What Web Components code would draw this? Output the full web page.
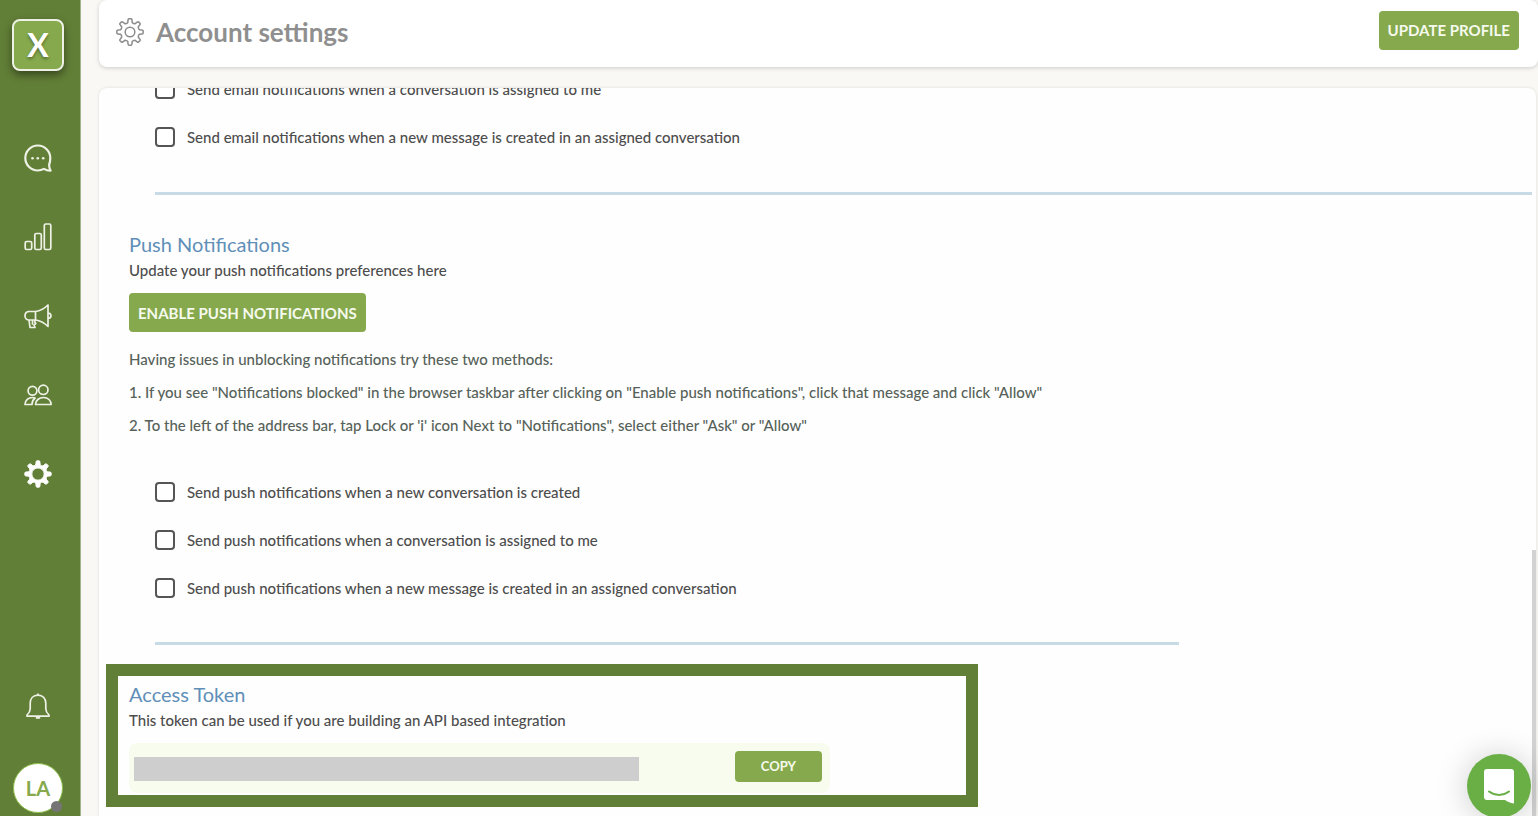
<!DOCTYPE html>
<html lang="en">
<head>
<meta charset="utf-8">
<meta name="viewport" content="width=device-width, initial-scale=1">
<title>Account settings</title>
<style>
    body {
        margin: 0;
        font-family: Lato, "Liberation Sans", sans-serif;
        font-size: 15px;
        font-weight: 500;
        line-height: 24px;
        color: #4d4d4d;
        --green-dark: #627f37;
        --green: #85a94c;
        --blue: #5f8fb8;
    }
</style>
</head>
<body>
<account-app></account-app>

<script>
// outline of an eight-toothed gear centred on 14,14
function gearPath(outer, inner) {
    const point = (radius, deg) => {
        const a = deg * Math.PI / 180;
        return `${(14 + radius * Math.sin(a)).toFixed(2)} ${(14 - radius * Math.cos(a)).toFixed(2)}`;
    };
    let d = '';
    for (let i = 0; i < 8; i++) {
        const a = i * 45;
        d += `${i ? 'L' : 'M'}${point(inner, a - 13)}`;
        d += `L${point(outer - 1, a - 9)}Q${point(outer, a - 8)} ${point(outer, a - 5)}`;
        d += `L${point(outer, a + 5)}Q${point(outer, a + 8)} ${point(outer - 1, a + 9)}`;
        d += `L${point(inner, a + 13)}Q${point(inner - 1, a + 22.5)} ${point(inner, a + 32)}`;
    }
    return d + 'z';
}

class AppButton extends HTMLElement {

    constructor() {
        super();
        this.attachShadow({ mode: 'open' });
    }

    connectedCallback() {
        this.shadowRoot.innerHTML = `
            <style>
                :host {
                    display: inline-block;
                }
                button {
                    display: block;
                    height: 39px;
                    padding: 0 9px;
                    border: 0;
                    border-radius: 4px;
                    background: var(--green);
                    color: #f6faee;
                    font: bold 15px/24px Lato, "Liberation Sans", sans-serif;
                    text-transform: uppercase;
                    white-space: nowrap;
                    cursor: pointer;
                }
                :host([small]) button {
                    height: 31px;
                    padding: 0 26px;
                    font-size: 13px;
                }
            </style>
            <button type="button"><slot></slot></button>
        `;
    }
}

class CheckRow extends HTMLElement {

    constructor() {
        super();
        this.attachShadow({ mode: 'open' });
    }

    connectedCallback() {
        this.shadowRoot.innerHTML = `
            <style>
                :host {
                    display: flex;
                    align-items: center;
                    height: 48px;
                    flex: none;
                }
                label {
                    display: flex;
                    align-items: center;
                    gap: 12px;
                }
                input {
                    appearance: none;
                    width: 20px;
                    height: 20px;
                    margin: 0;
                    border: 2px solid #555;
                    border-radius: 4px;
                    background: #fff;
                }
                input:checked {
                    background: var(--green);
                }
            </style>
            <label><input type="checkbox"><span><slot></slot></span></label>
        `;
    }
}

class SideBar extends HTMLElement {

    constructor() {
        super();
        this.attachShadow({ mode: 'open' });
    }

    connectedCallback() {
        this.shadowRoot.innerHTML = `
            <style>
                :host {
                    display: flex;
                    flex-direction: column;
                    align-items: center;
                    flex: none;
                    box-sizing: border-box;
                    width: 81px;
                    padding: 19px 4px 3px 0;
                    background: var(--green-dark);
                    border-right: 1px solid #a3b38a;
                }
                .logo {
                    box-sizing: border-box;
                    width: 52px;
                    height: 52px;
                    border: 2px solid #eef2e6;
                    border-radius: 8px;
                    background: var(--green);
                    box-shadow: 0 4px 8px rgba(0, 0, 0, .45);
                    color: #fff;
                    font-size: 32px;
                    font-weight: bold;
                    line-height: 48px;
                    text-align: center;
                    text-decoration: none;
                    text-shadow: 0 2px 3px rgba(0, 0, 0, .35);
                }
                nav {
                    display: flex;
                    flex-direction: column;
                    gap: 51px;
                    margin-top: 73px;
                }
                a, svg {
                    display: block;
                }
                svg {
                    width: 28px;
                    height: 28px;
                    fill: none;
                    stroke: #eef2e6;
                    stroke-width: 1.7;
                    stroke-linejoin: round;
                    stroke-linecap: round;
                }
                .bell {
                    margin-top: auto;
                }
                .avatar {
                    position: relative;
                    box-sizing: border-box;
                    width: 50px;
                    height: 50px;
                    margin-top: 43px;
                    padding: 0;
                    border: 1px solid #8fc04e;
                    border-radius: 50%;
                    background: #fff;
                    color: var(--green);
                    font: bold 20px/48px Lato, "Liberation Sans", sans-serif;
                }
                .status {
                    position: absolute;
                    right: 0;
                    bottom: 0;
                    width: 11px;
                    height: 11px;
                    border-radius: 50%;
                    background: #757575;
                }
            </style>
            <a class="logo" href="#">X</a>
            <nav>
                <a href="#" aria-label="Conversations">
                    <svg viewBox="0 0 28 28">
                        <path style="stroke-width:2.2" d="M26.300 14A12.500 12.500 0 1 0 13.800 26.500c2.300 0 4.300-.6 6.200-1.600 1.900 1.200 4 1.800 6.600 1.700-.9-1.700-1.500-3.400-1.500-5.600.8-2.200 1.200-4.400 1.200-7z"/>
                        <g fill="#eef2e6" stroke="none"><circle cx="8.500" cy="14.300" r="1.300"/><circle cx="13.800" cy="14.300" r="1.300"/><circle cx="19.200" cy="14.300" r="1.300"/></g>
                    </svg>
                </a>
                <a href="#" aria-label="Reports">
                    <svg viewBox="0 0 28 28">
                        <rect x="1.200" y="18.500" width="6.500" height="8" rx="1.500"/>
                        <rect x="10.800" y="10.500" width="6.500" height="16" rx="1.500"/>
                        <rect x="20.300" y="1" width="6.500" height="25.500" rx="1.500"/>
                    </svg>
                </a>
                <a href="#" aria-label="Campaigns">
                    <svg viewBox="0 0 28 28">
                        <path d="M11.500 9.500H5a4 4 0 0 0-4 4v.500a4 4 0 0 0 4 4h6.500zM11.500 9.500c5-.5 9-3 12.500-6.500v21.500c-3.500-3.500-7.500-6-12.500-6.500M24 11c4 .3 4 5.200 0 5.500M5 18l1 7.500h5l-1-2.500 1.800-1.500-1-1.500V18M8.500 18v4"/>
                    </svg>
                </a>
                <a href="#" aria-label="Contacts">
                    <svg viewBox="0 0 28 28">
                        <circle cx="8.500" cy="9.700" r="4.400"/>
                        <circle cx="19.300" cy="8.800" r="4.700"/>
                        <path d="M11.500 23.500c0-4 3.500-7 8-7s7.600 3 7.600 7zM8 23.500H1c0-4.500 3.500-7 7.500-7 1 0 1.800.1 2.600.5-2 1.500-3.100 3.700-3.100 6.500z"/>
                    </svg>
                </a>
                <a href="#" aria-label="Settings">
                    <svg viewBox="0 0 28 28">
                        <path fill="#fff" stroke="#fff" stroke-width="1" fill-rule="evenodd" d="${gearPath(13.2, 9.6)}M14 7.800a6.200 6.200 0 1 0 0 12.400 6.200 6.200 0 0 0 0-12.400z"/>
                    </svg>
                </a>
            </nav>
            <a class="bell" href="#" aria-label="Notifications">
                <svg viewBox="0 0 28 28">
                    <path d="M14 3.200c-5 0-7.800 3.500-7.800 8v5.500c0 2.500-1.300 4.500-3.200 6.300v1.200h22V23c-1.900-1.800-3.200-3.800-3.200-6.300v-5.500c0-4.500-2.800-8-7.800-8zM14 3V2M12.500 25.800h3"/>
                </svg>
            </a>
            <button class="avatar" type="button">LA<span class="status"></span></button>
        `;
    }
}

class PageHeader extends HTMLElement {

    constructor() {
        super();
        this.attachShadow({ mode: 'open' });
    }

    connectedCallback() {
        this.shadowRoot.innerHTML = `
            <style>
                :host {
                    display: flex;
                    align-items: center;
                    flex: none;
                    box-sizing: border-box;
                    height: 67px;
                    padding: 0 19px 3px 17px;
                    border-radius: 8px;
                    background: #fff;
                    box-shadow: 0 1px 4px rgba(0, 0, 0, .18);
                }
                svg {
                    width: 28px;
                    height: 28px;
                    margin-right: 12px;
                    fill: none;
                    stroke: #8c8c8c;
                    stroke-width: 1.5;
                    stroke-linejoin: round;
                }
                h1 {
                    flex: 1;
                    margin: 0;
                    font-size: 26px;
                    line-height: 32px;
                    color: #8f8f8f;
                }
                .actions {
                    display: flex;
                    padding-bottom: 4px;
                }
            </style>
            <svg viewBox="0 0 28 28" aria-hidden="true">
                <path d="${gearPath(13.2, 9.8)}"/>
                <circle cx="14" cy="14" r="4.800"/>
            </svg>
            <h1><slot></slot></h1>
            <div class="actions"><slot name="actions"></slot></div>
        `;
    }
}

class SettingsSection extends HTMLElement {

    constructor() {
        super();
        this.attachShadow({ mode: 'open' });
    }

    connectedCallback() {
        this.shadowRoot.innerHTML = `
            <style>
                :host {
                    display: block;
                    flex: none;
                }
                h2 {
                    margin: 0;
                    font-size: 20px;
                    font-weight: normal;
                    line-height: 28px;
                    color: var(--blue);
                }
                p {
                    margin: 0 0 11px;
                }
            </style>
            <h2>${this.getAttribute('heading')}</h2>
            <p>${this.getAttribute('description')}</p>
            <slot></slot>
        `;
    }
}

class TokenField extends HTMLElement {

    constructor() {
        super();
        this.attachShadow({ mode: 'open' });
    }

    connectedCallback() {
        this.shadowRoot.innerHTML = `
            <style>
                :host {
                    display: flex;
                    align-items: center;
                    justify-content: space-between;
                    box-sizing: border-box;
                    max-width: 701px;
                    height: 50px;
                    padding: 0 8px 0 5px;
                    border-radius: 8px;
                    background: #f8fcee;
                }
                input {
                    box-sizing: border-box;
                    flex: 0 1 505px;
                    min-width: 0;
                    height: 24px;
                    margin-top: 2px;
                    padding: 0;
                    border: 0;
                    background: #cecece;
                }
                app-button {
                    margin-bottom: 4px;
                }
            </style>
            <input type="text" readonly aria-label="Access token">
            <app-button small>Copy</app-button>
        `;
    }
}

class ChatLauncher extends HTMLElement {

    constructor() {
        super();
        this.attachShadow({ mode: 'open' });
    }

    connectedCallback() {
        this.shadowRoot.innerHTML = `
            <style>
                :host {
                    position: fixed;
                    right: 7px;
                    bottom: -2px;
                }
                button {
                    display: grid;
                    place-items: center;
                    width: 64px;
                    height: 64px;
                    padding: 0;
                    border: 0;
                    border-radius: 50%;
                    background: #6aae46;
                    box-shadow: 0 2px 32px rgba(0, 0, 0, .2);
                }
            </style>
            <button type="button" aria-label="Open chat">
                <svg width="32" height="36" viewBox="0 0 32 36">
                    <path fill="#fff" d="M4 1h24a3 3 0 0 1 3 3v31.500c-3.500-.6-6.500-1.800-9-3.500H4a3 3 0 0 1-3-3V4a3 3 0 0 1 3-3z"/>
                    <path fill="none" stroke="#6aae46" stroke-width="2" stroke-linecap="round" d="M6 23.500c6 4.500 14 4.500 20 0"/>
                </svg>
            </button>
        `;
    }
}

class AccountApp extends HTMLElement {

    constructor() {
        super();
        this.attachShadow({ mode: 'open' });
    }

    connectedCallback() {
        this.render();
    }

    render() {
        this.shadowRoot.innerHTML = `
            <style>
                :host {
                    display: flex;
                    height: 100vh;
                    overflow: hidden;
                    background: #f9f8f4;
                }
                main {
                    flex: 1;
                    min-width: 0;
                    display: flex;
                    flex-direction: column;
                    gap: 21px;
                    padding-left: 18px;
                }
                .panel {
                    position: relative;
                    flex: 1;
                    min-height: 0;
                    margin-right: 2px;
                    overflow: hidden;
                    border-radius: 8px 8px 0 0;
                    background: #fefefe;
                    box-shadow: 0 0 3px rgba(0, 0, 0, .12);
                }
                /* the list is scrolled half a row past the top edge */
                .content {
                    display: flex;
                    flex-direction: column;
                    margin-top: -23px;
                    padding: 0 4px 0 30px;
                }
                .checks {
                    padding-left: 26px;
                }
                hr {
                    flex: none;
                    height: 3px;
                    margin: 31px 0 35px 26px;
                    border: 0;
                    background: #c8dae6;
                }
                hr.short {
                    width: 73%;
                    margin: 30px 0 19px 26px;
                }
                .help {
                    margin: 11px 0 26px;
                    line-height: 33px;
                    color: #566259;
                }
                .help p {
                    margin: 0;
                }
                .highlight {
                    box-sizing: border-box;
                    width: 872px;
                    max-width: 100%;
                    margin-left: -23px;
                    padding: 4px 11px 2px;
                    border: 12px solid var(--green-dark);
                }
                .thumb {
                    position: absolute;
                    right: 0;
                    bottom: 0;
                    width: 4px;
                    height: 266px;
                    background: #d2d2d2;
                }
            </style>
            <side-bar></side-bar>
            <main>
                <page-header>Account settings<app-button slot="actions">Update profile</app-button></page-header>
                <div class="panel">
                    <div class="content">
                        <div class="checks">
                            <check-row>Send email notifications when a conversation is assigned to me</check-row>
                            <check-row>Send email notifications when a new message is created in an assigned conversation</check-row>
                        </div>
                        <hr>
                        <settings-section heading="Push Notifications" description="Update your push notifications preferences here">
                            <app-button>Enable push notifications</app-button>
                            <div class="help">
                                <p>Having issues in unblocking notifications try these two methods:</p>
                                <p>1. If you see "Notifications blocked" in the browser taskbar after clicking on "Enable push notifications", click that message and click "Allow"</p>
                                <p>2. To the left of the address bar, tap Lock or 'i' icon Next to "Notifications", select either "Ask" or "Allow"</p>
                            </div>
                            <div class="checks">
                                <check-row>Send push notifications when a new conversation is created</check-row>
                                <check-row>Send push notifications when a conversation is assigned to me</check-row>
                                <check-row>Send push notifications when a new message is created in an assigned conversation</check-row>
                            </div>
                        </settings-section>
                        <hr class="short">
                        <settings-section class="highlight" heading="Access Token" description="This token can be used if you are building an API based integration">
                            <token-field></token-field>
                        </settings-section>
                    </div>
                    <div class="thumb"></div>
                </div>
            </main>
            <chat-launcher></chat-launcher>
        `;
    }
}

customElements.define('app-button', AppButton);
customElements.define('check-row', CheckRow);
customElements.define('side-bar', SideBar);
customElements.define('page-header', PageHeader);
customElements.define('settings-section', SettingsSection);
customElements.define('token-field', TokenField);
customElements.define('chat-launcher', ChatLauncher);
customElements.define('account-app', AccountApp);
</script>
</body>
</html>
